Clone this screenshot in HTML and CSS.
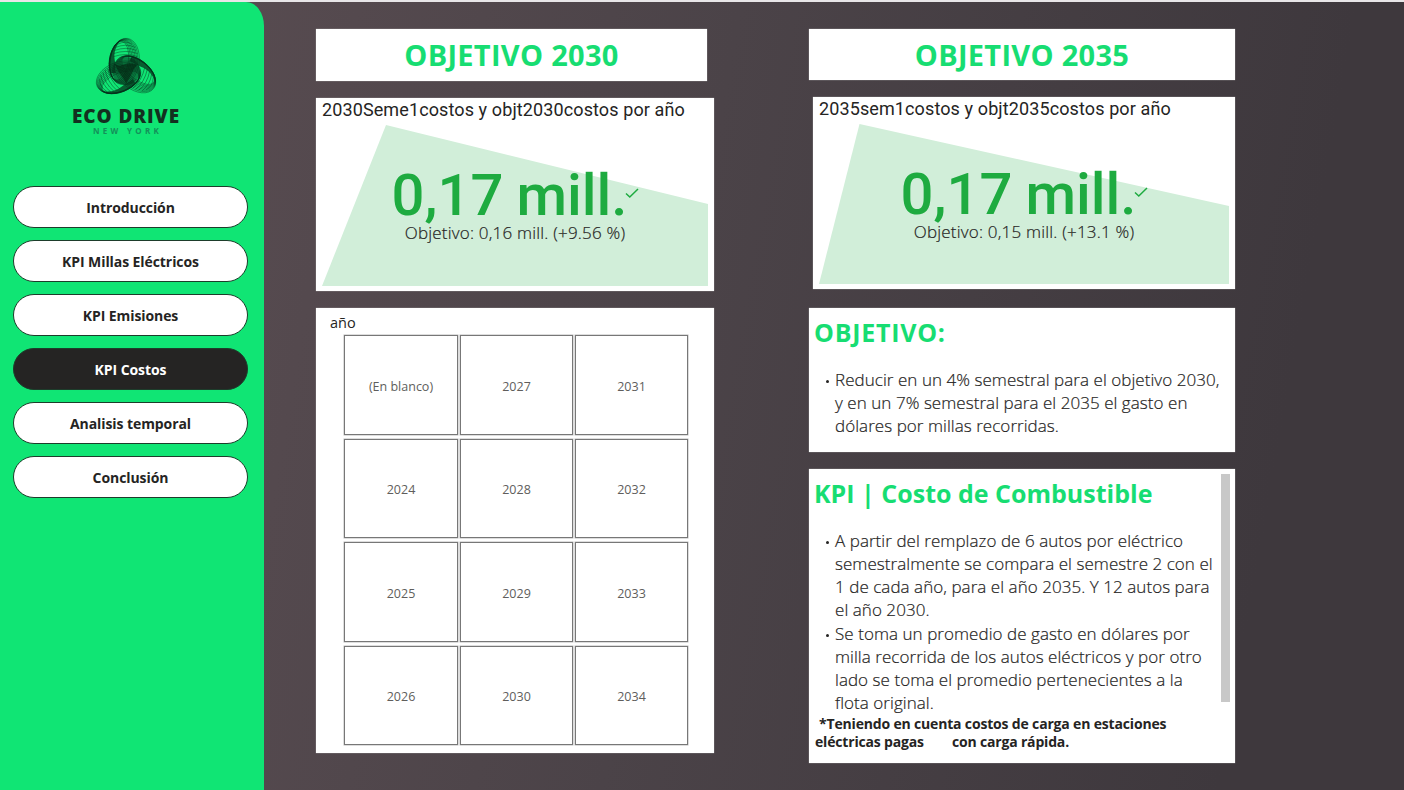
FILE: index.html
```html
<!DOCTYPE html>
<html lang="es">
<head>
<meta charset="utf-8">
<title>Eco Drive - KPI Costos</title>
<link rel="stylesheet" href="styles.css">
</head>
<body>
<div class="page">
  <aside class="sidebar">
    <div class="brand">
      <svg class="brand-mark" viewBox="-32 -33 64 64">
        <defs>
          <g id="blade">
            <ellipse cx="-3" cy="-9" rx="14.500" ry="22.500" transform="rotate(8)"/>
            <ellipse cx="-3.700" cy="-9" rx="13.700" ry="22" transform="rotate(8)"/>
            <ellipse cx="-4.400" cy="-9" rx="12.900" ry="21.500" transform="rotate(8)"/>
            <ellipse cx="-5.100" cy="-9" rx="12.100" ry="21" transform="rotate(8)"/>
            <ellipse cx="-5.800" cy="-9" rx="11.300" ry="20.500" transform="rotate(8)"/>
            <ellipse cx="-6.500" cy="-9" rx="10.500" ry="20" transform="rotate(8)"/>
            <ellipse cx="-7.200" cy="-9" rx="9.700" ry="19.500" transform="rotate(8)"/>
            <ellipse cx="-7.900" cy="-9" rx="8.900" ry="19" transform="rotate(8)"/>
            <path d="M-8 -26Q0 -30 6 -26M-10 -23Q0 -27 9 -23M-11 -20Q0 -24 10 -20M-12 -17Q0 -21 11 -17M-12 -14Q0 -18 11 -14"/>
            <path class="edge" d="M-15 2C-18 -9 -14 -25 -5 -30C-10 -24 -12 -18 -11 -11C-10 -6 -11 -4 -10 2Z"/>
          </g>
        </defs>
        <use href="#blade"/>
        <use href="#blade" transform="rotate(120)"/>
        <use href="#blade" transform="rotate(240)"/>
        <circle class="disc" r="13.500"/>
        <path class="core" d="M-11 -7Q-6 -4 -3 -6Q3 -9 11 -6Q7 -2 6 2Q4 6 0 12Q-2 7 -5 4Q-8 0 -11 -7Z"/>
      </svg>
      <div class="brand-name">ECO DRIVE</div>
      <div class="brand-place">NEW YORK</div>
    </div>
    <nav class="menu">
      <a class="menu-item">Introducción</a>
      <a class="menu-item">KPI Millas Eléctricos</a>
      <a class="menu-item">KPI Emisiones</a>
      <a class="menu-item active">KPI Costos</a>
      <a class="menu-item">Analisis temporal</a>
      <a class="menu-item">Conclusión</a>
    </nav>
  </aside>

  <main class="board">
    <section class="column left">
      <h1 class="card heading">OBJETIVO 2030</h1>
      <div class="card kpi">
        <svg class="trend" viewBox="0 0 398 193"><path d="M6 188L70 27L392 106V188Z"/></svg>
        <div class="kpi-title">2030Seme1costos y objt2030costos por año</div>
        <div class="kpi-value"><span>0,17</span><span class="unit">mill.</span><svg class="check" viewBox="0 0 14 11"><path d="M1 5.500L4.800 9L13 1"/></svg></div>
        <div class="kpi-goal">Objetivo: 0,16 mill. (+9.56 %)</div>
      </div>
      <div class="card slicer">
        <div class="slicer-title">año</div>
        <div class="tiles">
          <div class="tile">(En blanco)</div><div class="tile">2027</div><div class="tile">2031</div>
          <div class="tile">2024</div><div class="tile">2028</div><div class="tile">2032</div>
          <div class="tile">2025</div><div class="tile">2029</div><div class="tile">2033</div>
          <div class="tile">2026</div><div class="tile">2030</div><div class="tile">2034</div>
        </div>
      </div>
    </section>

    <section class="column right">
      <h1 class="card heading">OBJETIVO 2035</h1>
      <div class="card kpi">
        <svg class="trend" viewBox="0 0 422 192"><path d="M6 187L46.500 27L416 109V187Z"/></svg>
        <div class="kpi-title">2035sem1costos y objt2035costos por año</div>
        <div class="kpi-value"><span>0,17</span><span class="unit">mill.</span><svg class="check" viewBox="0 0 14 11"><path d="M1 5.500L4.800 9L13 1"/></svg></div>
        <div class="kpi-goal">Objetivo: 0,15 mill. (+13.1 %)</div>
      </div>
      <div class="card note goal-note">
        <h2>OBJETIVO:</h2>
        <ul>
          <li>Reducir en un 4% semestral para el objetivo 2030,<br>y en un 7% semestral para el 2035 el gasto en<br>dólares por millas recorridas.</li>
        </ul>
      </div>
      <div class="card note fuel-note">
        <div class="note-text">
          <h2>KPI | Costo de Combustible</h2>
          <ul>
            <li>A partir del remplazo de 6 autos por eléctrico<br>semestralmente se compara el semestre 2 con el<br>1 de cada año, para el año 2035. Y 12 autos para<br>el año 2030.</li>
            <li>Se toma un promedio de gasto en dólares por<br>milla recorrida de los autos eléctricos y por otro<br>lado se toma el promedio pertenecientes a la<br>flota original.</li>
          </ul>
          <p class="footnote"><span class="indent">*Teniendo en cuenta costos de carga en estaciones</span><br>eléctricas pagas<span class="gap"></span>con carga rápida.</p>
        </div>
        <div class="scrollbar"></div>
      </div>
    </section>
  </main>
</div>
</body>
</html>
```
FILE: styles.css
```css
* { box-sizing: border-box; }

body {
  margin: 0;
  font-family: "Open Sans", "Noto Sans", sans-serif;
  color: #252423;
}

.page {
  display: flex;
  width: 1404px;
  height: 790px;
  overflow: hidden;
  border-top: 2px solid #e8e6e8;
  background: linear-gradient(100deg, #574b50 15%, #4b4348 48%, #3e383d 88%);
}

.sidebar {
  width: 264px;
  flex: none;
  background: #10e574;
  border-top-right-radius: 18px 24px;
}

.brand {
  height: 184px;
  padding-top: 35px;
  padding-right: 12px;
  display: flex;
  flex-direction: column;
  align-items: center;
}

.brand-mark {
  width: 66px;
  height: 66px;
  fill: none;
  stroke: #062f1c;
  stroke-width: 0.4;
}

.brand-mark .edge { fill: #04301a; fill-opacity: 0.75; stroke: none; }
.brand-mark .core { fill: #03200f; fill-opacity: 0.6; stroke: none; }
.brand-mark .disc { fill: #04301a; fill-opacity: 0.55; stroke: none; }

.brand-name {
  margin-top: 2px;
  font: 800 19px/22px "Open Sans", sans-serif;
  letter-spacing: 0.9px;
  color: #13301f;
  white-space: nowrap;
}

.brand-place {
  font: 700 8px/8px "Open Sans", sans-serif;
  letter-spacing: 3.3px;
  padding-left: 3px;
  color: #15905a;
  white-space: nowrap;
}

.menu {
  display: flex;
  flex-direction: column;
  gap: 12px;
  padding-left: 13px;
}

.menu-item {
  width: 235px;
  height: 42px;
  border: 1px solid #1d3d2b;
  border-radius: 21px;
  background: #fff;
  font-size: 14px;
  font-weight: 700;
  letter-spacing: -0.08px;
  line-height: 41px;
  text-align: center;
}

.menu-item.active { background: #252423; color: #fff; }

.board { display: flex; padding: 27px 0 0 52px; }

.column { display: flex; flex-direction: column; }
.left { width: 398px; margin-right: 95px; }
.right { width: 426px; }

.card {
  background: #fff;
  box-shadow: 0 0 1px #bbb;
}

.heading {
  margin: 0;
  height: 51px;
  font-size: 29px;
  font-weight: 700;
  letter-spacing: 0.3px;
  line-height: 51px;
  text-align: center;
  color: #17dd72;
}
.left .heading { width: 391px; height: 52px; }

.kpi {
  position: relative;
  height: 193px;
  margin-top: 17px;
}
.right .kpi { width: 422px; height: 192px; margin-left: 4px; }

.trend { position: absolute; inset: 0; fill: #d1eed9; }

.kpi-title {
  position: relative;
  height: 66px;
  padding-left: 6px;
  font: 400 18px/24px Roboto, sans-serif;
  letter-spacing: 0.11px;
  white-space: nowrap;
}

.kpi-value {
  position: relative;
  display: flex;
  justify-content: center;
  height: 57px;
  padding-left: 1px;
  font: 500 58px/62px Roboto, sans-serif;
  white-space: nowrap;
  color: #1eab40;
}

.unit { margin-left: 13px; }

.check {
  width: 14px;
  height: 11px;
  margin-top: 24px;
  margin-left: -2px;
  fill: none;
  stroke: #1eab40;
  stroke-width: 1.5;
}

.kpi-goal {
  position: relative;
  font-size: 17px;
  font-weight: 300;
  letter-spacing: 0.2px;
  line-height: 24px;
  text-align: center;
  white-space: nowrap;
}

.kpi-goal, .note li { -webkit-text-stroke: 0.2px #252423; }

.slicer { height: 445px; margin-top: 17px; padding: 4px 26px 7px 28px; }

.slicer-title { margin-left: -14px; font-size: 14.500px; line-height: 21px; }

.tiles {
  display: grid;
  grid-template-columns: 114px 113px 113px;
  grid-auto-rows: 99.500px;
  gap: 4px 2px;
  margin-top: 2px;
}

.tile {
  display: flex;
  align-items: center;
  justify-content: center;
  padding-top: 3px;
  border: 1px solid #777;
  box-shadow: 0 0 0 0.5px #bbb;
  font-size: 12.500px;
  color: #605e5c;
}

.note h2 {
  margin: 0 0 0 -1px;
  font-size: 25px;
  font-weight: 700;
  line-height: 32px;
  white-space: nowrap;
  color: #17dd72;
}

.goal-note h2 { letter-spacing: 0.75px; }

.note ul { margin: 20px 0 0; padding: 0 0 0 20px; list-style: none; }

.note li {
  position: relative;
  font-size: 17px;
  font-weight: 300;
  letter-spacing: 0.05px;
  line-height: 23px;
  white-space: nowrap;
}

.note li::before {
  content: "";
  position: absolute;
  left: -9px;
  top: 12px;
  width: 3px;
  height: 3px;
  border-radius: 50%;
  background: #252423;
}

.note li + li { margin-top: 1px; }

.goal-note { height: 144px; margin-top: 19px; padding: 8px 6px; }

.fuel-note {
  display: flex;
  justify-content: space-between;
  height: 294px;
  margin-top: 17px;
  padding: 8px 5px 0 6px;
}

.footnote {
  margin: 1px 0 0;
  font-size: 14px;
  font-weight: 700;
  letter-spacing: -0.17px;
  line-height: 18px;
  white-space: nowrap;
}

.indent { padding-left: 4px; }
.gap { display: inline-block; width: 28px; }

.scrollbar { width: 9px; height: 228px; margin-top: -3px; background: #c8c8c8; }
```
